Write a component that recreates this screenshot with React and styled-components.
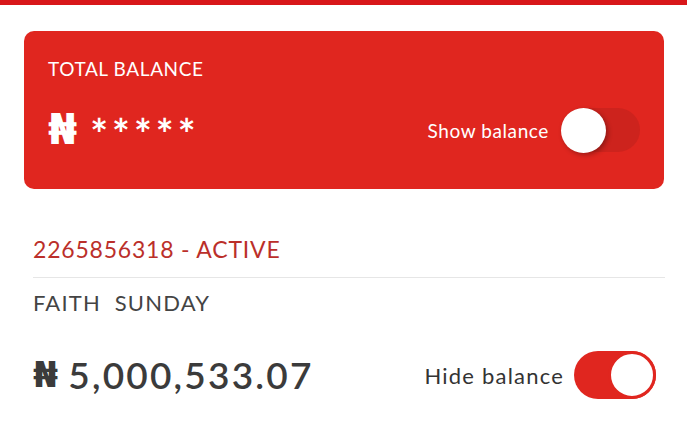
import React from 'react';
import styled, { createGlobalStyle } from 'styled-components';

const GlobalStyle = createGlobalStyle`
  body {
    margin: 0;
    background: #ffffff;
    font-family: Lato, "Open Sans", sans-serif;
  }
`;

const Page = styled.div`
  width: 687px;
  height: 423px;
  overflow: hidden;
  background: #fff;
`;

const TopBar = styled.div`
  height: 5px;
  background: #d8171a;
`;

const Card = styled.div`
  margin: 26px 23px 0 24px;
  height: 158px;
  box-sizing: border-box;
  padding: 27px 24px 0 24px;
  border-radius: 10px;
  background: #e0261f;
  color: #fff;
`;

const CardTitle = styled.div`
  font-size: 19px;
  line-height: 22px;
  letter-spacing: 0.6px;
`;

const CardRow = styled.div`
  display: flex;
  align-items: center;
  justify-content: space-between;
  margin-top: 28px;
`;

const Masked = styled.div`
  display: flex;
  align-items: center;
  gap: 13px;
  line-height: 44px;
`;

const Naira = styled.span`
  font-size: ${(p) => p.$size}px;
  font-weight: 700;
  font-family: "DejaVu Sans", sans-serif;
`;

const Stars = styled.span`
  font-size: 42px;
  font-weight: 700;
  letter-spacing: 4px;
  position: relative;
  top: 4px;
`;

const ToggleGroup = styled.div`
  display: flex;
  align-items: center;
  gap: ${(p) => p.$gap}px;
`;

const ToggleLabel = styled.span`
  font-size: ${(p) => p.$size}px;
  color: ${(p) => p.$color};
  letter-spacing: ${(p) => p.$spacing}px;
`;

const Track = styled.div`
  display: flex;
  align-items: center;
  justify-content: ${(p) => (p.$on ? 'flex-end' : 'flex-start')};
  width: ${(p) => p.$w}px;
  height: ${(p) => p.$h}px;
  border-radius: ${(p) => p.$h / 2}px;
  background: ${(p) => (p.$on ? '#e0261f' : 'rgba(120, 20, 20, 0.18)')};
  box-sizing: border-box;
`;

const Knob = styled.div`
  width: ${(p) => p.$d}px;
  height: ${(p) => p.$d}px;
  border-radius: 50%;
  background: #fff;
  box-sizing: border-box;
  border: ${(p) => (p.$on ? '3px solid #e0261f' : 'none')};
  box-shadow: ${(p) => (p.$on ? 'none' : '2px 2px 5px rgba(0,0,0,0.3)')};
`;

const Details = styled.div`
  padding: 0 22px 0 33px;
  margin-top: 45px;
`;

const Account = styled.div`
  font-size: 23px;
  line-height: 30px;
  letter-spacing: 0.8px;
  color: #bb2f2a;
  padding-bottom: 13px;
  border-bottom: 1px solid #e6e6e6;
`;

const Name = styled.div`
  font-size: 22px;
  line-height: 30px;
  letter-spacing: 1.2px;
  color: #444;
  margin-top: 10px;
`;

const AmountRow = styled.div`
  display: flex;
  align-items: center;
  justify-content: space-between;
  margin-top: 33px;
  padding-right: 9px;
`;

const Amount = styled.div`
  display: flex;
  align-items: center;
  gap: 8px;
  font-size: 37px;
  font-weight: 600;
  letter-spacing: 2.2px;
  color: #3b3b3b;
  line-height: 48px;
`;

function Switch({ on, w, h, d }) {
  return (
    <Track $on={on} $w={w} $h={h}>
      <Knob $on={on} $d={d} />
    </Track>
  );
}

export default function App() {
  return (
    <Page>
      <GlobalStyle />
      <TopBar />
      <Card>
        <CardTitle>TOTAL BALANCE</CardTitle>
        <CardRow>
          <Masked>
            <Naira $size={42}>₦</Naira>
            <Stars>*****</Stars>
          </Masked>
          <ToggleGroup $gap={12}>
            <ToggleLabel $size={19} $color="#fff" $spacing={0.6}>Show balance</ToggleLabel>
            <Switch on={false} w={79} h={44} d={45} />
          </ToggleGroup>
        </CardRow>
      </Card>
      <Details>
        <Account>2265856318 - ACTIVE</Account>
        <Name>FAITH&nbsp; SUNDAY</Name>
        <AmountRow>
          <Amount>
            <Naira $size={36}>₦</Naira>
            <span>5,000,533.07</span>
          </Amount>
          <ToggleGroup $gap={10}>
            <ToggleLabel $size={22} $color="#333" $spacing={1.2}>Hide balance</ToggleLabel>
            <Switch on w={82} h={48} d={48} />
          </ToggleGroup>
        </AmountRow>
      </Details>
    </Page>
  );
}
